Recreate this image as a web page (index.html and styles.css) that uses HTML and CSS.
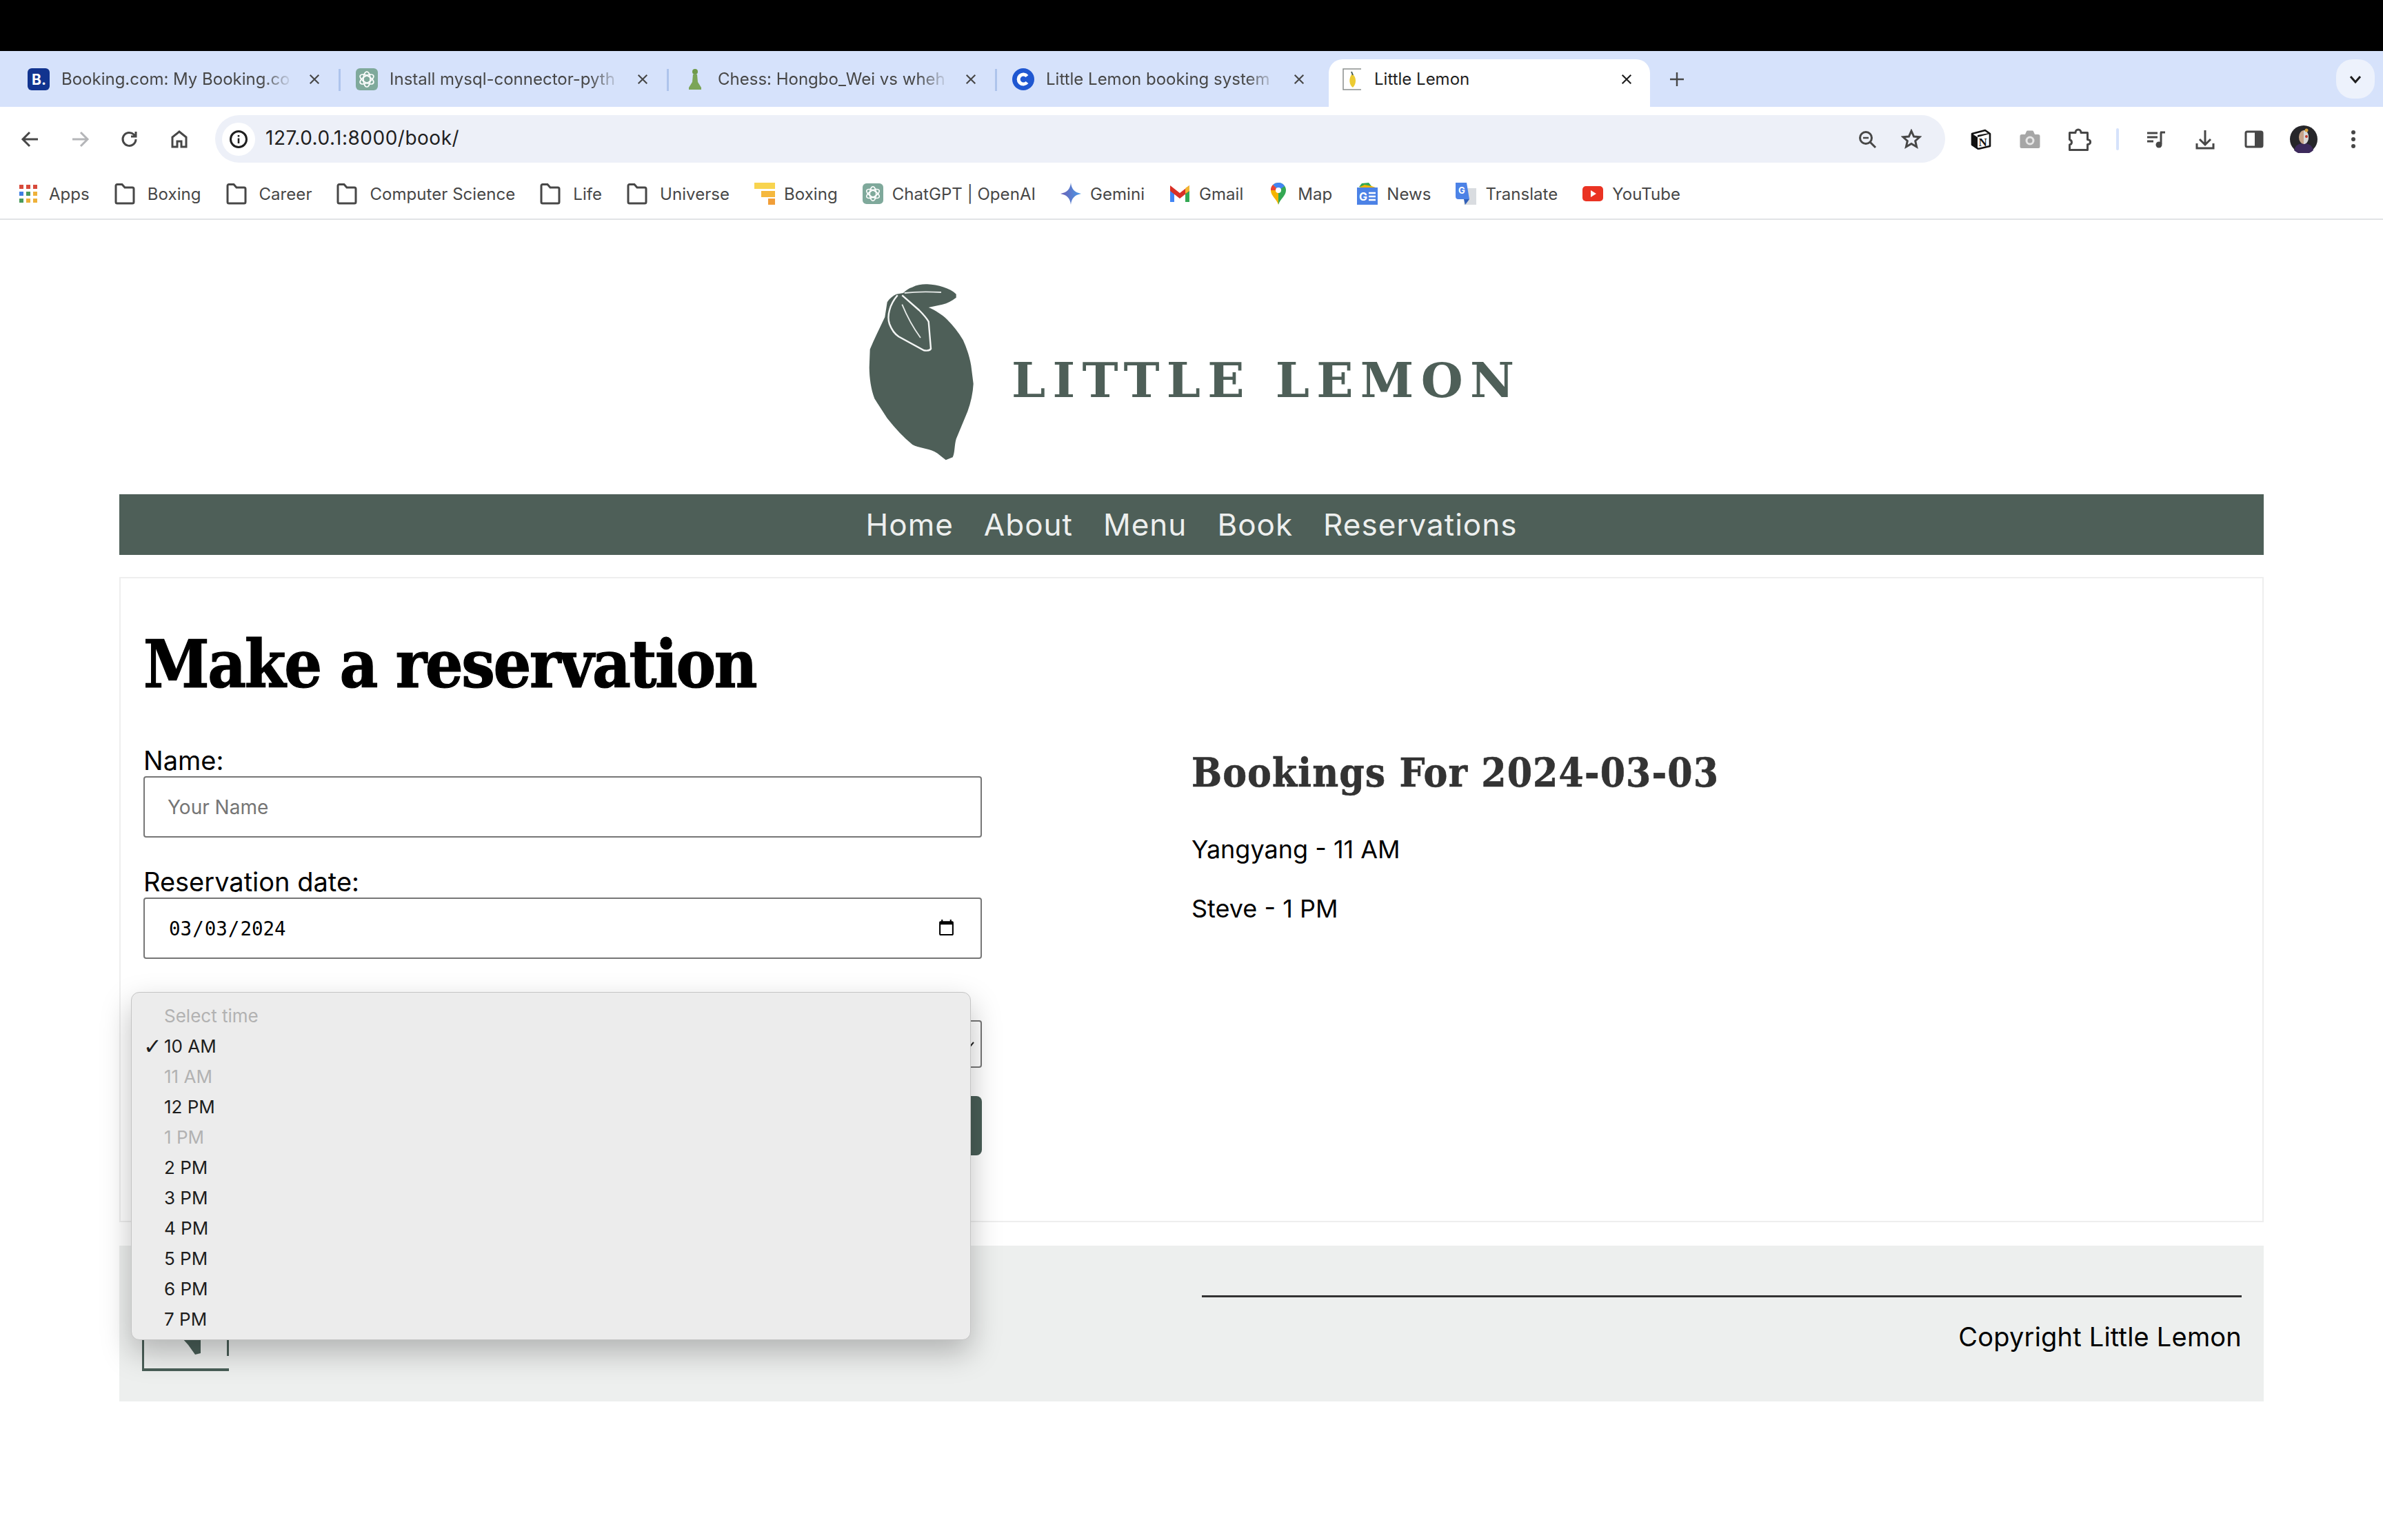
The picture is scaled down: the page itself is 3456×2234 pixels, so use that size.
FILE: index.html
```html
<!DOCTYPE html>
<html lang="en">
<head>
    <meta charset="UTF-8">
    <title>Little Lemon</title>
    <link rel="stylesheet" href="styles.css">
</head>
<body>
    <svg class="defs" width="0" height="0">
        <symbol id="close" viewBox="0 0 20 20"><path d="M3 3l14 14M17 3L3 17" fill="none" stroke="currentColor" stroke-width="2.4"/></symbol>
        <symbol id="folder" viewBox="0 0 30 32"><path d="M2 4.5a2 2 0 0 1 2-2h7l4 4.500h11a2 2 0 0 1 2 2v19a2 2 0 0 1-2 2H4a2 2 0 0 1-2-2z" fill="none" stroke="#474747" stroke-width="3"/></symbol>
        <symbol id="gpt" viewBox="0 0 32 32"><rect width="32" height="32" rx="6" fill="#7fa99b"/><g fill="none" stroke="#fff" stroke-width="1.700"><ellipse cx="16" cy="16" rx="5" ry="11"/><ellipse cx="16" cy="16" rx="5" ry="11" transform="rotate(60 16 16)"/><ellipse cx="16" cy="16" rx="5" ry="11" transform="rotate(120 16 16)"/></g></symbol>
    </svg>

    <div class="topbar"></div>

    <div class="tabstrip">
        <div class="tab">
            <svg class="favicon" viewBox="0 0 32 32"><rect width="32" height="32" rx="6" fill="#12348f"/><text x="6" y="24" font-size="21" font-weight="700" fill="#fff" font-family="Inter, sans-serif">B.</text></svg>
            <span class="tab-title">Booking.com: My Booking.co</span>
            <svg class="tab-close"><use href="#close"/></svg>
        </div>
        <div class="tab">
            <svg class="favicon"><use href="#gpt"/></svg>
            <span class="tab-title">Install mysql-connector-pyth</span>
            <svg class="tab-close"><use href="#close"/></svg>
        </div>
        <div class="tab">
            <svg class="favicon" viewBox="0 0 32 32"><circle cx="16" cy="5" r="4" fill="#6f9a4a"/><path d="M13 9h6l1 11 5 8v3H7v-3l5-8z" fill="#7ba557"/></svg>
            <span class="tab-title">Chess: Hongbo_Wei vs wheh</span>
            <svg class="tab-close"><use href="#close"/></svg>
        </div>
        <div class="tab tab-last">
            <svg class="favicon" viewBox="0 0 32 32"><circle cx="16" cy="16" r="16" fill="#1f57d1"/><path d="M21.500 11.500a7 7 0 1 0 0 9" fill="none" stroke="#fff" stroke-width="5"/></svg>
            <span class="tab-title">Little Lemon booking system</span>
            <svg class="tab-close"><use href="#close"/></svg>
        </div>
        <div class="tab tab-active">
            <svg class="favicon favicon-small" viewBox="0 0 28 32"><path d="M27 1H1v30h26" fill="none" stroke="#8a8f8d" stroke-width="1.500"/><path d="M14 8c6 4 7 14 1 20-5-3-7-13-1-20z" fill="#eccb33"/><path d="M13 5l2 5" stroke="#495e57" stroke-width="2"/></svg>
            <span class="tab-title">Little Lemon</span>
            <svg class="tab-close"><use href="#close"/></svg>
        </div>
        <svg class="new-tab" viewBox="0 0 22 22"><path d="M11 1v20M1 11h20" stroke="#474747" stroke-width="2.400"/></svg>
        <div class="tab-search"><svg width="18" height="12" viewBox="0 0 18 12"><path d="M2 2l7 8 7-8" fill="none" stroke="#1f1f1f" stroke-width="3"/></svg></div>
    </div>

    <div class="toolbar">
        <svg class="tool" viewBox="0 0 28 28"><path d="M25 14H4M13 4L3 14l10 10" fill="none" stroke="#474747" stroke-width="3"/></svg>
        <svg class="tool" viewBox="0 0 28 28"><path d="M3 14h21M15 4l10 10-10 10" fill="none" stroke="#b4b5b8" stroke-width="3"/></svg>
        <svg class="tool" viewBox="0 0 28 28"><path d="M23 14a9.500 9.500 0 1 1-3-7l3 3M23 3v7h-7" fill="none" stroke="#474747" stroke-width="3"/></svg>
        <svg class="tool" viewBox="0 0 28 28"><path d="M4 25V11L14 3l10 8v14h-7v-8h-6v8z" fill="none" stroke="#474747" stroke-width="3"/></svg>
        <div class="omnibox">
            <span class="site-chip">
                <svg width="28" height="28" viewBox="0 0 28 28"><circle cx="14" cy="14" r="11.500" fill="none" stroke="#1f1f1f" stroke-width="3"/><path d="M14 12.500V20M14 8v2.500" stroke="#1f1f1f" stroke-width="2.600"/></svg>
            </span>
            <span class="url">127.0.0.1:8000/book/</span>
            <svg class="omni-icon zoom-icon" viewBox="0 0 28 28"><circle cx="12" cy="12" r="8.500" fill="none" stroke="#474747" stroke-width="3"/><path d="M8 12h8" stroke="#474747" stroke-width="2.500"/><path d="M18 18l8 8" stroke="#474747" stroke-width="3"/></svg>
            <svg class="omni-icon star-icon" viewBox="0 0 30 30"><path d="M15 3l3.600 8 8.400.8-6.300 5.700 1.900 8.500L15 21.500 7.400 26l1.900-8.500L3 11.800l8.400-.8z" fill="none" stroke="#474747" stroke-width="3"/></svg>
        </div>
        <svg class="ext" viewBox="0 0 30 30"><path d="M2 7L21 2l7 5v18l-17 4-9-6z" fill="#fff" stroke="#111" stroke-width="2.600" stroke-linejoin="round"/><path d="M2 7l8 5v17l-8-6zM10 12l18-5-1-1-17 3z" fill="#111"/><text x="11.500" y="25" font-size="17" font-weight="700" font-family="Liberation Serif, serif" fill="#111">N</text></svg>
        <svg class="ext" viewBox="0 0 30 30"><path d="M3 8h5l2-4.500a1.500 1.500 0 0 1 1.500-1h7a1.500 1.500 0 0 1 1.500 1L22 8h5a2.500 2.500 0 0 1 2.500 2.500v15A2.500 2.500 0 0 1 27 28H3a2.500 2.500 0 0 1-2.500-2.500v-15A2.500 2.500 0 0 1 3 8z" fill="#a6a6a6"/><circle cx="15" cy="17" r="6.500" fill="#e6e6e6"/><circle cx="15" cy="17" r="3.500" fill="#a6a6a6"/></svg>
        <svg class="ext ext-wide" viewBox="0 0 34 34"><path d="M2.500 7.500H11c0-6 8-6 8 0h9.500v10c5.500 0 5.500 7 0 7v8H2.500V25c4-1 4-6 0-7.500z" fill="none" stroke="#474747" stroke-width="3" stroke-linejoin="round"/></svg>
        <span class="tool-sep"></span>
        <svg class="ext" viewBox="0 0 30 30"><path d="M2 6h15M2 12h15M2 18h9" stroke="#474747" stroke-width="3"/><path d="M22 5v17" stroke="#474747" stroke-width="3"/><path d="M21 5h7" stroke="#474747" stroke-width="3"/><circle cx="19" cy="23" r="4.500" fill="#474747"/></svg>
        <svg class="ext" viewBox="0 0 30 30"><path d="M15 2v20M7 15l8 8 8-8M3 21v7h24v-7" fill="none" stroke="#474747" stroke-width="3"/></svg>
        <svg class="ext" viewBox="0 0 30 30"><rect x="3" y="4" width="24" height="22" rx="2" fill="none" stroke="#474747" stroke-width="3"/><rect x="16" y="4" width="11" height="22" fill="#474747"/></svg>
        <svg class="avatar" viewBox="0 0 40 40"><circle cx="20" cy="20" r="20" fill="#26262a"/><path d="M6 36c2-8 8-10 14-10s12 2 14 10a20 20 0 0 1-28 0z" fill="#3d2a5c"/><ellipse cx="20" cy="17" rx="7" ry="10" fill="#c7a48a"/><path d="M20 7c4 0 7 4 7 10s-3 10-7 10z" fill="#d9d9d9"/><circle cx="24" cy="16" r="2" fill="#c0392b"/><circle cx="24" cy="7" r="2.500" fill="#d9a13a"/></svg>
        <svg class="dots" viewBox="0 0 8 28"><circle cx="4" cy="4" r="3" fill="#474747"/><circle cx="4" cy="14" r="3" fill="#474747"/><circle cx="4" cy="24" r="3" fill="#474747"/></svg>
    </div>

    <div class="bookmarks">
        <div class="mark mark-apps"><svg class="mark-icon" viewBox="0 0 30 30"><g fill="#d84a3b"><rect x="2" y="2" width="6" height="6"/><rect x="12" y="2" width="6" height="6"/><rect x="22" y="2" width="6" height="6"/></g><g fill="#3f7fe3"><rect x="2" y="12" width="6" height="6"/><rect x="22" y="12" width="6" height="6" fill="#eeb13a"/></g><rect x="12" y="12" width="6" height="6" fill="#4a9a5c"/><g fill="#4a9a5c"><rect x="2" y="22" width="6" height="6"/><rect x="12" y="22" width="6" height="6" fill="#eeb13a"/><rect x="22" y="22" width="6" height="6" fill="#eeb13a"/></g></svg>Apps</div>
        <div class="mark mark-folder"><svg class="mark-icon"><use href="#folder"/></svg>Boxing</div>
        <div class="mark mark-folder"><svg class="mark-icon"><use href="#folder"/></svg>Career</div>
        <div class="mark mark-folder"><svg class="mark-icon"><use href="#folder"/></svg>Computer Science</div>
        <div class="mark mark-folder"><svg class="mark-icon"><use href="#folder"/></svg>Life</div>
        <div class="mark mark-folder"><svg class="mark-icon"><use href="#folder"/></svg>Universe</div>
        <div class="mark"><svg class="mark-icon" viewBox="0 0 30 32"><rect width="30" height="9" fill="#f8d44f"/><rect x="10" y="12" width="20" height="9" fill="#f5b83d"/><rect x="20" y="23" width="10" height="9" fill="#f19e38"/></svg>Boxing</div>
        <div class="mark"><svg class="mark-icon"><use href="#gpt"/></svg>ChatGPT | OpenAI</div>
        <div class="mark"><svg class="mark-icon" viewBox="0 0 30 32"><defs><linearGradient id="gem" x1="0" x2="1"><stop offset="0" stop-color="#6b5fb5"/><stop offset="1" stop-color="#4b9be8"/></linearGradient></defs><path d="M15 0c1 9 5 14 15 16-10 2-14 7-15 16-1-9-5-14-15-16 10-2 14-7 15-16z" fill="url(#gem)"/></svg>Gemini</div>
        <div class="mark"><svg class="mark-icon" viewBox="0 0 30 32"><path d="M1 8v20h6V14z" fill="#4285f4"/><path d="M29 8v20h-6V14z" fill="#34a853"/><path d="M1 4l14 11L29 4v8L15 23 1 12z" fill="#d93025"/><path d="M23 8l6-4v8l-6 4z" fill="#f2b632"/></svg>Gmail</div>
        <div class="mark"><svg class="mark-icon" viewBox="0 0 30 32"><path d="M15 0a11 11 0 0 1 11 11c0 8-8 12-11 21z" fill="#34a853"/><path d="M15 0a11 11 0 0 0-11 11c0 8 8 12 11 21z" fill="#f4b400"/><path d="M7 3a11 11 0 0 1 8-3 11 11 0 0 1 9 5l-9 6z" fill="#4285f4"/><path d="M4 11a11 11 0 0 1 3-8l8 8z" fill="#ea4335"/><circle cx="15" cy="11" r="4" fill="#fff"/></svg>Map</div>
        <div class="mark"><svg class="mark-icon" viewBox="0 0 30 32"><path d="M3 6l4-5 10-1 4 5z" fill="#34a853"/><path d="M3 7l8-4 10 2 6 2v4H3z" fill="#f4b400"/><rect y="7" width="30" height="25" fill="#4c82e6"/><text x="3" y="26" font-size="16" font-weight="700" font-family="Inter, sans-serif" fill="#fff">G</text><path d="M17 15h10M17 20h10M17 25h10" stroke="#fff" stroke-width="2.500"/></svg>News</div>
        <div class="mark"><svg class="mark-icon" viewBox="0 0 30 32"><rect x="12" y="8" width="18" height="24" fill="#d9dce0"/><path d="M0 0h16l4 24H4a4 4 0 0 1-4-4z" fill="#4c82e6"/><path d="M12 24l8 0-6 8z" fill="#2f5fb8"/><text x="4" y="16" font-size="13" font-weight="700" font-family="Inter, sans-serif" fill="#fff">G</text></svg>Translate</div>
        <div class="mark"><svg class="mark-icon" viewBox="0 0 30 32"><rect y="5" width="30" height="22" rx="5" fill="#ea3323"/><path d="M12 11l8 5-8 5z" fill="#fff"/></svg>YouTube</div>
    </div>
    <div class="page">
        <header class="logo">
            <svg class="lemon" viewBox="0 0 152 256">
                <path d="M85 .3C100 1 118 6 126.700 14.700L126.700 19.700C120 25 114 28 106.700 29.700L86.700 34C96 38 106 44 113.300 51.300 122 60 130 70 136.700 81.300 142 93 146 105 148.300 118L151.700 144.700C151 158 148 172 143.300 184.700L126.700 224.700C124 234 125 244 121.700 251.300L111.700 255.300C106 251 101 246 95 243 84 238 73 238 63.300 233 50 222 38 209 26.700 194.700L8.300 166.300C3 152 1 137 .7 121.300L1.700 94.700C8 79 16 64 23.300 48L26.700 26.300C30 21 35 17 40 14.700L50 13C54 9 58 6 63 4.700 70 1 78 0 85 .3z" fill="#4e5f58"/>
                <path d="M41.700 16.300C36 23 32 30 30 38 28 45 28 52 30 58 33 66 37 72 43.300 76.300L80 96.300C84 97 88 97 90 94L86.700 54.700C83 48 78 43 73 38L48.300 16.300" fill="none" stroke="#f4f6f5" stroke-width="2.400"/>
                <path d="M48.300 29.700C55 46 64 63 75 78M51.700 13C68 11 88 11 105 12" fill="none" stroke="#e7ebe9" stroke-width="1.800"/>
            </svg>
            <span class="logo-text">LITTLE LEMON</span>
        </header>

        <nav class="site-nav">
            <a>Home</a>
            <a>About</a>
            <a>Menu</a>
            <a>Book</a>
            <a>Reservations</a>
        </nav>

        <main class="content">
            <h1>Make a reservation</h1>
            <div class="columns">
                <form class="booking-form">
                    <label for="name">Name:</label>
                    <input type="text" id="name" placeholder="Your Name">
                    <label for="date">Reservation date:</label>
                    <input type="date" id="date" value="2024-03-03">
                    <label class="time-label"></label>
                    <div class="time-select">
                        <svg width="14" height="10" viewBox="0 0 14 10"><path d="M2 2l5 6 5-6" fill="none" stroke="#222" stroke-width="2"/></svg>
                    </div>
                    <button type="button" class="submit"></button>
                </form>
                <section class="bookings">
                    <h2>Bookings For 2024-03-03</h2>
                    <p>Yangyang - 11 AM</p>
                    <p>Steve - 1 PM</p>
                </section>
            </div>
        </main>

        <footer class="site-footer">
            <svg class="footer-logo" viewBox="0 0 126 150">
                <path d="M1.500 0v146" stroke="#495e57" stroke-width="3"/>
                <path d="M0 146h126" stroke="#495e57" stroke-width="4"/>
                <path d="M124.500 0v126" stroke="#495e57" stroke-width="3"/>
                <path d="M49 80h36v42l-8 2-10-14-18-20z" fill="#495e57"/>
            </svg>
            <div class="footer-right">
                <hr>
                <p>Copyright Little Lemon</p>
            </div>
        </footer>
    </div>

    <ul class="time-menu">
        <li class="off">Select time</li>
        <li class="picked">10 AM</li>
        <li class="off">11 AM</li>
        <li>12 PM</li>
        <li class="off">1 PM</li>
        <li>2 PM</li>
        <li>3 PM</li>
        <li>4 PM</li>
        <li>5 PM</li>
        <li>6 PM</li>
        <li>7 PM</li>
    </ul>
</body>
</html>
```

FILE: styles.css
```css
* {
    box-sizing: border-box;
}

html, body {
    margin: 0;
    height: 2234px;
    overflow: hidden;
    background: #fff;
}

body {
    position: relative;
    font-family: "Inter", "Liberation Sans", sans-serif;
    color: #000;
}

.defs {
    position: absolute;
}

/* browser chrome */
.topbar {
    height: 74px;
    background: #000;
}

.tabstrip {
    display: flex;
    height: 81px;
    padding: 12px 12px 0 24px;
    background: #d6e2fb;
}

.tab {
    display: flex;
    align-items: flex-start;
    flex: none;
    width: 476px;
    height: 69px;
    padding: 13px 0 0 16px;
    position: relative;
    font-size: 24px;
    color: #474747;
}

.tab:not(.tab-active):not(.tab-last)::after {
    content: "";
    position: absolute;
    right: 6px;
    top: 14px;
    width: 3px;
    height: 32px;
    background: #aec4ec;
}

.tab-last {
    width: 475px;
}

.tab-active {
    width: 466px;
    background: #fff;
    border-radius: 20px 20px 0 0;
    padding-left: 20px;
    color: #1f1f1f;
}

.favicon {
    flex: none;
    width: 32px;
    height: 32px;
}

.favicon-small {
    width: 28px;
}

.tab-title {
    flex: none;
    width: 345px;
    margin-left: 17px;
    line-height: 32px;
    white-space: nowrap;
    overflow: hidden;
    -webkit-mask-image: linear-gradient(to right, #000 290px, transparent 336px);
    mask-image: linear-gradient(to right, #000 290px, transparent 336px);
}

.tab-active .tab-title {
    width: 354px;
    margin-left: 18px;
    -webkit-mask-image: none;
    mask-image: none;
}

.tab-close {
    flex: none;
    width: 18px;
    height: 18px;
    margin: 7px 0 0 13px;
}

.tab-active .tab-close {
    color: #1f1f1f;
    margin-left: 3px;
}

.new-tab {
    flex: none;
    width: 22px;
    height: 22px;
    margin: 18px 0 0 28px;
}

.tab-search {
    display: flex;
    align-items: center;
    justify-content: center;
    width: 56px;
    height: 57px;
    margin-left: auto;
    background: #edf2fc;
    border-radius: 24px;
}

.toolbar {
    display: flex;
    align-items: center;
    height: 93px;
    background: #fff;
    border-radius: 16px 16px 0 0;
}

.tool {
    flex: none;
    width: 28px;
    height: 28px;
    margin-left: 44px;
}

.tool:first-child {
    margin-left: 30px;
}

.omnibox {
    display: flex;
    align-items: center;
    flex: none;
    width: 2509px;
    height: 69px;
    margin-left: 38px;
    padding-left: 10px;
    background: #edf0f8;
    border-radius: 35px;
}

.site-chip {
    display: flex;
    align-items: center;
    justify-content: center;
    width: 48px;
    height: 48px;
    background: #fff;
    border-radius: 50%;
}

.url {
    margin: 0 0 3px 15px;
    font-size: 28px;
    letter-spacing: 0.5px;
    color: #1f1f1f;
}

.omni-icon {
    flex: none;
}

.zoom-icon {
    width: 28px;
    height: 28px;
    margin-left: auto;
}

.star-icon {
    width: 30px;
    height: 30px;
    margin: 0 34px 0 35px;
}

.ext {
    flex: none;
    width: 30px;
    height: 30px;
    margin-left: 41px;
}

.omnibox + .ext {
    margin-left: 37px;
}

.ext-wide {
    width: 34px;
    height: 34px;
    margin-left: 40px;
}

.tool-sep {
    flex: none;
    width: 4px;
    height: 32px;
    margin-left: 36px;
    background: #d6e2fb;
    border-radius: 2px;
}

.tool-sep + .ext {
    margin-left: 39px;
}

.avatar {
    flex: none;
    width: 40px;
    height: 40px;
    margin-left: 37px;
}

.dots {
    flex: none;
    width: 8px;
    height: 28px;
    margin-left: 48px;
}

.bookmarks {
    display: flex;
    align-items: center;
    gap: 36px;
    height: 71px;
    padding: 0 0 3px 26px;
    background: #fff;
    border-bottom: 2px solid #e1e3e6;
    font-size: 24px;
    letter-spacing: 0.05px;
    color: #474747;
}

.mark {
    display: flex;
    align-items: center;
    gap: 13px;
    white-space: nowrap;
}

.mark-folder {
    gap: 18px;
}

.mark-apps {
    gap: 15px;
}

.mark-icon {
    flex: none;
    width: 30px;
    height: 32px;
}

/* the page */
.page {
    width: 3110px;
    margin-left: 173px;
}

.logo {
    display: flex;
    align-items: flex-start;
    height: 398px;
    padding: 93px 0 0 1087px;
}

.lemon {
    flex: none;
    width: 152px;
    height: 256px;
}

.logo-text {
    margin: 101px 0 0 55px;
    font-family: "DejaVu Serif", serif;
    font-weight: 700;
    font-size: 70px;
    line-height: 78px;
    letter-spacing: 10.3px;
    color: #4e5f58;
    white-space: nowrap;
}

.site-nav {
    display: flex;
    justify-content: center;
    align-items: center;
    gap: 44px;
    height: 88px;
    background: #4e5f58;
    font-size: 44px;
    letter-spacing: 1px;
    color: #edefee;
}

.content {
    height: 936px;
    margin-top: 32px;
    padding-left: 33px;
    border: 2px solid #eeeeee;
}

h1 {
    margin: 0;
    padding-top: 70px;
    font-family: "DejaVu Serif Condensed", "DejaVu Serif", serif;
    font-weight: 700;
    font-size: 96px;
    line-height: 110px;
    letter-spacing: -2.4px;
    -webkit-text-stroke: 1.2px #000;
    color: #000;
}

.columns {
    display: grid;
    grid-template-columns: 1216px 1fr;
    column-gap: 304px;
    margin-top: 63px;
}

.booking-form {
    display: flex;
    flex-direction: column;
}

label {
    height: 44px;
    font-size: 38px;
    line-height: 42px;
}

label:not(:first-child) {
    margin-top: 43px;
}

label.time-label {
    margin-top: 45px;
}

input {
    flex: none;
    width: 100%;
    height: 89px;
    margin: 0;
    padding: 0 33px;
    border: 2px solid #767676;
    border-radius: 4px;
    background: #fff;
    font-family: "Inter", sans-serif;
    font-size: 28px;
    color: #000;
}

input::placeholder {
    color: #757575;
}

input[type="date"] {
    padding: 0 34px;
    font-family: "DejaVu Sans Mono", monospace;
    font-size: 27.5px;
}

.time-select {
    display: flex;
    align-items: center;
    justify-content: flex-end;
    height: 69px;
    padding-right: 8px;
    border: 2px solid #767676;
    border-radius: 4px;
}

.submit {
    height: 86px;
    margin-top: 41px;
    border: 0;
    border-radius: 8px;
    background: #495e57;
}

.bookings {
    font-size: 36px;
}

.bookings h2 {
    margin: 4px 0 0;
    font-family: "DejaVu Serif Condensed", "DejaVu Serif", serif;
    font-weight: 700;
    font-size: 58px;
    line-height: 70px;
    letter-spacing: 1.1px;
    -webkit-text-stroke: 0.6px #333;
    color: #333;
}

.bookings p {
    margin: 0;
    height: 86px;
    line-height: 46px;
}

.bookings h2 + p {
    margin-top: 53px;
}

.site-footer {
    display: flex;
    justify-content: space-between;
    height: 226px;
    margin-top: 34px;
    padding: 34px 32px 0 33px;
    background: #edefee;
}

.footer-logo {
    flex: none;
    width: 126px;
    height: 150px;
}

.footer-right {
    width: 1508px;
    padding-top: 38px;
    text-align: right;
    font-size: 38px;
    letter-spacing: 0.2px;
}

.footer-right hr {
    height: 3px;
    margin: 0;
    border: 0;
    background: #333;
}

.footer-right p {
    margin: 34px 0 0;
    line-height: 46px;
}

/* open select dropdown */
.time-menu {
    position: absolute;
    left: 190px;
    top: 1439px;
    width: 1218px;
    height: 505px;
    margin: 0;
    padding: 12px 0 0 47px;
    list-style: none;
    background: #ececec;
    border: 1px solid #c4c4c4;
    border-radius: 12px;
    box-shadow: 0 18px 44px rgba(0, 0, 0, 0.25);
    font-size: 26px;
    color: #1d1d1d;
}

.time-menu li {
    position: relative;
    height: 44px;
    line-height: 44px;
}

.time-menu .off {
    color: #b2b2b2;
}

.time-menu .picked::before {
    content: "✓";
    position: absolute;
    left: -30px;
    font-family: "DejaVu Sans", sans-serif;
    font-size: 32px;
    font-weight: 700;
}
```
